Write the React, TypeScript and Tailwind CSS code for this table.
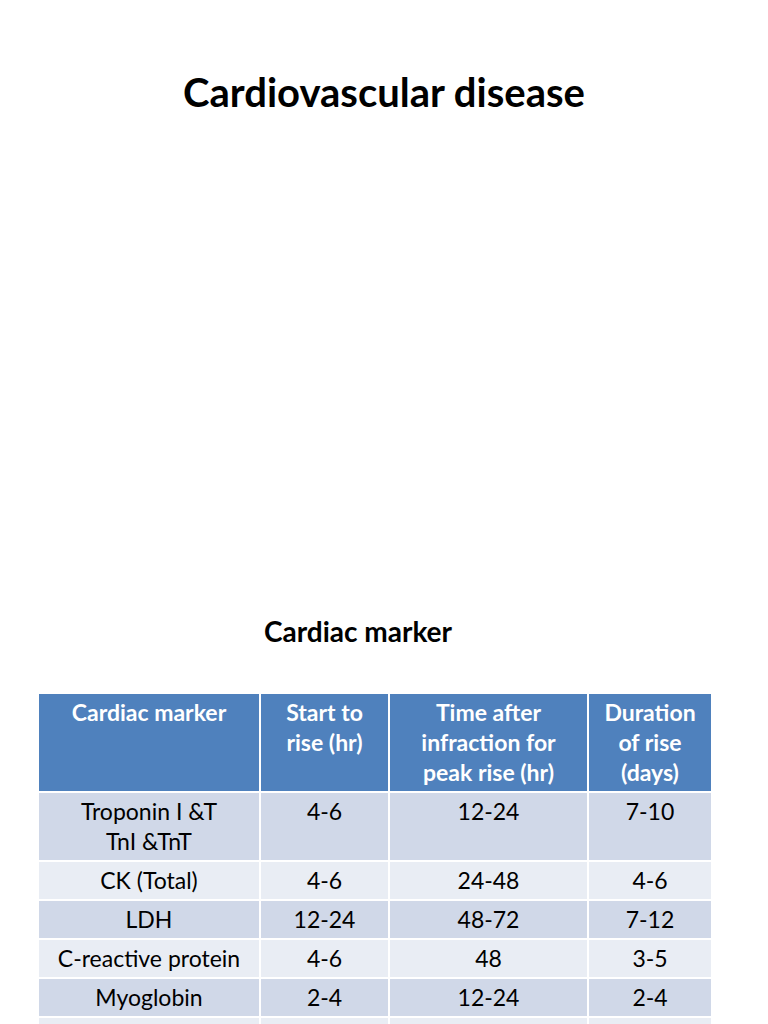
import React from "react";

const rows = [
  ["Troponin I &T\nTnI &TnT", "4-6", "12-24", "7-10"],
  ["CK (Total)", "4-6", "24-48", "4-6"],
  ["LDH", "12-24", "48-72", "7-12"],
  ["C-reactive protein", "4-6", "48", "3-5"],
  ["Myoglobin", "2-4", "12-24", "2-4"],
  ["", "", "", ""],
];

const headers = [
  "Cardiac marker",
  "Start to\nrise (hr)",
  "Time after\ninfraction for\npeak rise (hr)",
  "Duration\nof rise\n(days)",
];

export default function App() {
  return (
    <div className="w-[768px] h-[1024px] overflow-hidden bg-white text-black font-['Lato',sans-serif]">
      <h1 className="pt-[66px] text-center text-[40px] font-bold leading-[52px]">
        Cardiovascular disease
      </h1>

      <h2 className="mt-[496px] pr-[52px] text-center text-[28px] font-bold leading-[34px]">
        Cardiac marker
      </h2>

      <table className="mt-[46px] ml-[39px] w-[672px] border-collapse text-[23px] leading-[30px]">
        <colgroup>
          <col className="w-[221px]" />
          <col className="w-[129px]" />
          <col className="w-[199px]" />
          <col className="w-[123px]" />
        </colgroup>
        <thead>
          <tr className="bg-[#4f81bd] text-white">
            {headers.map((h, i) => (
              <th
                key={i}
                className="h-[98px] border-2 border-t-0 border-white px-1 pt-[3px] align-top text-center font-bold whitespace-pre-line first:border-l-0 last:border-r-0"
              >
                {h}
              </th>
            ))}
          </tr>
        </thead>
        <tbody>
          {rows.map((r, ri) => (
            <tr key={ri} className={ri % 2 === 0 ? "bg-[#d0d8e8]" : "bg-[#e9edf4]"}>
              {r.map((c, ci) => (
                <td
                  key={ci}
                  className={
                    "border-2 border-white px-1 pt-[3px] pb-[4px] align-top text-center whitespace-pre-line first:border-l-0 last:border-r-0 " +
                    (ri === 0 ? "h-[68px]" : "h-[37px]")
                  }
                >
                  {c}
                </td>
              ))}
            </tr>
          ))}
        </tbody>
      </table>
    </div>
  );
}
